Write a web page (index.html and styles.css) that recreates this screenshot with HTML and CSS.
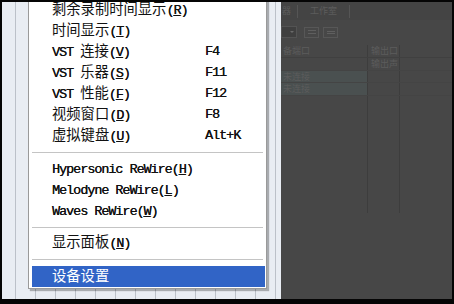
FILE: index.html
```html
<!DOCTYPE html>
<html lang="zh">
<head>
<meta charset="utf-8">
<title>菜单</title>
<link rel="stylesheet" href="styles.css">
</head>
<body>
<div class="screen">
  <div class="desk">
    <div class="light-pane"></div>
    <div class="dark-pane">
      <div class="tabs">
        <div class="tab tab-cut"><span class="zh-s">器</span></div>
        <div class="tab"><span class="zh-s">工作室</span></div>
      </div>
      <div class="toolbar">
        <div class="combo"><span class="arrow"></span></div>
        <div class="tbtn"><span class="tbar"></span></div>
        <div class="tbtn"><span class="tbar low"></span></div>
      </div>
      <div class="table">
        <div class="trow head">
          <div class="c1 zh-s">备端口</div>
          <div class="c2 zh-s">输出口</div>
          <div class="c3"></div>
        </div>
        <div class="trow">
          <div class="c1"></div>
          <div class="c2 zh-s">输出声</div>
          <div class="c3"></div>
        </div>
        <div class="trow">
          <div class="c1 tint zh-s">未连接</div>
          <div class="c2"></div>
          <div class="c3"></div>
        </div>
        <div class="trow">
          <div class="c1 tint zh-s">未连接</div>
          <div class="c2"></div>
          <div class="c3"></div>
        </div>
        <div class="trow filler">
          <div class="c1"></div>
          <div class="c2"></div>
          <div class="c3"></div>
        </div>
      </div>
    </div>

    <div class="menu">
      <div class="item"><span class="label"><span class="zh">剩余录制时间显示</span>(<u>R</u>)</span></div>
      <div class="item"><span class="label"><span class="zh">时间显示</span>(<u>T</u>)</span></div>
      <div class="item"><span class="label">VST <span class="zh">连接</span>(<u>V</u>)</span><span class="key">F4</span></div>
      <div class="item"><span class="label">VST <span class="zh">乐器</span>(<u>S</u>)</span><span class="key">F11</span></div>
      <div class="item"><span class="label">VST <span class="zh">性能</span>(<u>F</u>)</span><span class="key">F12</span></div>
      <div class="item"><span class="label"><span class="zh">视频窗口</span>(<u>D</u>)</span><span class="key">F8</span></div>
      <div class="item"><span class="label"><span class="zh">虚拟键盘</span>(<u>U</u>)</span><span class="key">Alt+K</span></div>
      <div class="sep sep-a"></div>
      <div class="item"><span class="label">Hypersonic ReWire(<u>H</u>)</span></div>
      <div class="item"><span class="label">Melodyne ReWire(<u>L</u>)</span></div>
      <div class="item"><span class="label">Waves ReWire(<u>W</u>)</span></div>
      <div class="sep sep-b"></div>
      <div class="item"><span class="label"><span class="zh">显示面板</span>(<u>N</u>)</span></div>
      <div class="sep sep-a"></div>
      <div class="item active"><span class="label"><span class="zh">设备设置</span></span></div>
    </div>
  </div>
</div>
</body>
</html>
```
FILE: styles.css
```css
* { box-sizing: border-box; }

html, body {
  margin: 0;
  padding: 0;
  background: #000;
}

.screen {
  width: 454px;
  height: 304px;
  background: #050505;
  padding: 2px 2px 5px 2px;
}

.desk {
  position: relative;
  width: 450px;
  height: 297px;
  display: flex;
  overflow: hidden;
}

.light-pane {
  width: 279px;
  flex: none;
  background-color: #e9edf3;
  background-image: repeating-linear-gradient(
    to right,
    transparent 0,
    transparent 13px,
    #bcc1c9 13px,
    #bcc1c9 14px,
    transparent 14px,
    transparent 20px
  );
}

.dark-pane {
  flex: 1;
  background: #474747;
  display: flex;
  flex-direction: column;
  color: #5c5c5c;
}

.zh-s {
  font-family: "Noto Sans CJK SC", sans-serif;
  font-size: 9px;
  line-height: 12px;
}

.tabs {
  height: 18px;
  display: flex;
  align-items: center;
  background: #444;
}

.tab {
  height: 13px;
  display: flex;
  align-items: center;
  padding: 0 12px;
  border-right: 1px solid #555;
}

.tab-cut {
  width: 17px;
  padding: 0 1px;
  justify-content: flex-start;
}

.toolbar {
  height: 24px;
  display: flex;
  align-items: center;
  gap: 4px;
}

.combo {
  width: 16px;
  height: 12px;
  background: #3f3f3f;
  border: 1px solid #535353;
  display: flex;
  align-items: center;
  justify-content: flex-end;
  padding-right: 2px;
  margin-right: 3px;
}

.arrow {
  width: 0;
  height: 0;
  border-left: 2px solid transparent;
  border-right: 2px solid transparent;
  border-top: 2px solid #6a6a6a;
}

.tbtn {
  width: 15px;
  height: 11px;
  border: 1px solid #575757;
  display: flex;
  align-items: center;
  justify-content: center;
}

.tbar {
  width: 8px;
  height: 4px;
  border-top: 1px solid #5f5f5f;
  border-bottom: 1px solid #5f5f5f;
}

.tbar.low { height: 3px; }

.table {
  margin-top: 1px;
  display: flex;
  flex-direction: column;
}

.trow {
  height: 12.5px;
  display: flex;
  border-bottom: 1px solid #444;
}

.trow.head {
  height: 13px;
  border-bottom: 1px solid #404040;
}

.trow.filler {
  height: 117px;
  border-bottom: none;
}

.c1 {
  width: 87px;
  padding-left: 2px;
  border-right: 1px solid #3d3d3d;
}

.c2 {
  width: 32px;
  padding-left: 3px;
  border-right: 1px solid #3d3d3d;
}

.c3 { flex: 1; }

.tint { background: #4a5050; }

/* ---------- menu ---------- */

.menu {
  position: absolute;
  left: 26px;
  top: -7px;
  width: 239px;
  background: #fff;
  border: 1px solid #9a9a9a;
  padding: 3px 1px 1px 3px;
  box-shadow: 2px 2px 1px rgba(0, 0, 0, 0.28);
  font-family: "Liberation Mono", monospace;
  font-size: 13.4px;
  letter-spacing: -1px;
  color: #111;
  display: flex;
  flex-direction: column;
}

.item {
  height: 21px;
  display: flex;
  align-items: center;
  padding-left: 20px;
  white-space: nowrap;
}

.label,
.key {
  line-height: 16px;
  text-shadow: 0.25px 0 0 currentColor;
}

.label {
  width: 153px;
}

.zh {
  font-family: "Noto Sans CJK SC", sans-serif;
  font-size: 14.3px;
  letter-spacing: 0;
  text-shadow: none;
}

.item u {
  text-decoration: underline;
  text-decoration-thickness: 1px;
  text-underline-offset: 1px;
}

.item.active {
  background: #3164c6;
  color: #fff;
}

.sep {
  display: flex;
  flex-direction: column;
  padding: 0 2px 0 0;
}

.sep::before {
  content: "";
  display: block;
  height: 1px;
  background: #c4c4c4;
}

.sep-a {
  height: 13px;
  padding-top: 6px;
}

.sep-b {
  height: 10px;
  padding-top: 5px;
}
```
